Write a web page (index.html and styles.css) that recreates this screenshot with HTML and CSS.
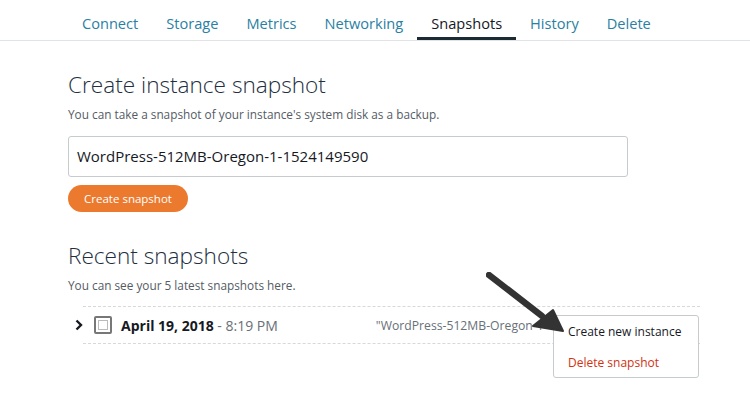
FILE: index.html
```html
<!DOCTYPE html>
<html>
<head>
<meta charset="utf-8">
<link rel="stylesheet" href="styles.css">
</head>
<body>
<nav class="tabs">
  <a class="tab">Connect</a>
  <a class="tab">Storage</a>
  <a class="tab">Metrics</a>
  <a class="tab">Networking</a>
  <a class="tab active">Snapshots</a>
  <a class="tab">History</a>
  <a class="tab">Delete</a>
</nav>
<main class="content">
  <h1 class="title">Create instance snapshot</h1>
  <p class="sub">You can take a snapshot of your instance's system disk as a backup.</p>
  <div class="input">WordPress-512MB-Oregon-1-1524149590</div>
  <button class="btn">Create snapshot</button>
  <h2 class="title title2">Recent snapshots</h2>
  <p class="sub">You can see your 5 latest snapshots here.</p>
  <div class="row">
    <svg class="chev" width="8" height="12" viewBox="0 0 8 12"><path d="M1.5 1.5 L6 6 L1.5 10.5" fill="none" stroke="#16191f" stroke-width="2.4"/></svg>
    <span class="check"></span>
    <span class="date">April 19, 2018</span>
    <span class="time">&nbsp;- 8:19 PM</span>
    <span class="name">"WordPress-512MB-Oregon-1-1524149590"</span>
  </div>
  <div class="menu">
    <div class="item">Create new instance</div>
    <div class="item danger">Delete snapshot</div>
  </div>
  <svg class="arrow" width="100" height="70" viewBox="0 0 100 70">
    <line x1="3" y1="3" x2="56" y2="44" stroke="#333" stroke-width="6.5" stroke-linecap="round"/>
    <polygon points="47,54 67,38 77,59" fill="#333" stroke="#333" stroke-width="2" stroke-linejoin="round"/>
  </svg>
</main>
</body>
</html>
```
FILE: styles.css
```css
* { box-sizing: border-box; }
body {
  margin: 0;
  background: #fff;
  font-family: "Open Sans", "Noto Sans", sans-serif;
  color: #16191f;
  width: 750px;
  height: 410px;
  overflow: hidden;
}
.tabs {
  display: flex;
  padding-left: 68px;
  height: 41px;
  border-bottom: 1px solid #e1e4e6;
}
.tab {
  padding: 8px 14px 0;
  font-size: 14.6px;
  line-height: 30px;
  color: #2a7fa3;
  height: 40px;
  border-bottom: 3px solid transparent;
}
.tab.active {
  color: #16191f;
  border-bottom-color: #1c2b33;
}
.content {
  position: relative;
  padding-top: 28px;
  padding-left: 68px;
}
.title {
  margin: 0;
  font-size: 22.6px;
  font-weight: 300;
  line-height: 32px;
  color: #232f3e;
}
.title2 { margin-top: 28px; }
.sub {
  margin: 4px 0 0;
  font-size: 11.8px;
  line-height: 18px;
  color: #545b64;
}
.input {
  margin-top: 13px;
  width: 560px;
  height: 41px;
  border: 1px solid #c6cbcd;
  border-radius: 3px;
  padding: 0 8px;
  font-size: 15px;
  line-height: 39px;
  color: #16191f;
}
.btn {
  display: block;
  margin-top: 8px;
  width: 120px;
  height: 27px;
  border: none;
  border-radius: 14px;
  background: #ec7a2e;
  color: #fff;
  font-family: inherit;
  font-size: 11.5px;
  padding: 0;
}
.row {
  margin-top: 12px;
  margin-left: 15px;
  width: 617px;
  height: 38px;
  border-top: 1px dashed #d5d9db;
  border-bottom: 1px dashed #d5d9db;
  display: flex;
  align-items: center;
}
.chev { margin-left: -8px; }
.check {
  margin-left: 11px;
  width: 18px;
  height: 18px;
  border: 2px solid #777;
  border-radius: 2px;
  box-shadow: inset 0 0 0 2px #fff, inset 0 0 0 3px #bbb;
}
.date {
  margin-left: 9px;
  font-weight: 700;
  font-size: 14px;
  color: #16191f;
}
.time {
  font-size: 14px;
  color: #687078;
}
.name {
  margin-left: 98px;
  font-size: 12.2px;
  color: #687078;
  white-space: nowrap;
  overflow: hidden;
}
.menu {
  position: absolute;
  left: 553px;
  top: 274px;
  width: 146px;
  height: 63px;
  background: #fff;
  border: 1px solid #c6cbcd;
  border-radius: 3px;
  padding: 8px 0 0 14px;
}
.item {
  font-size: 12px;
  line-height: 16px;
  color: #16191f;
}
.item.danger {
  margin-top: 15px;
  color: #d13212;
}
.arrow {
  position: absolute;
  left: 486px;
  top: 231px;
}
```
